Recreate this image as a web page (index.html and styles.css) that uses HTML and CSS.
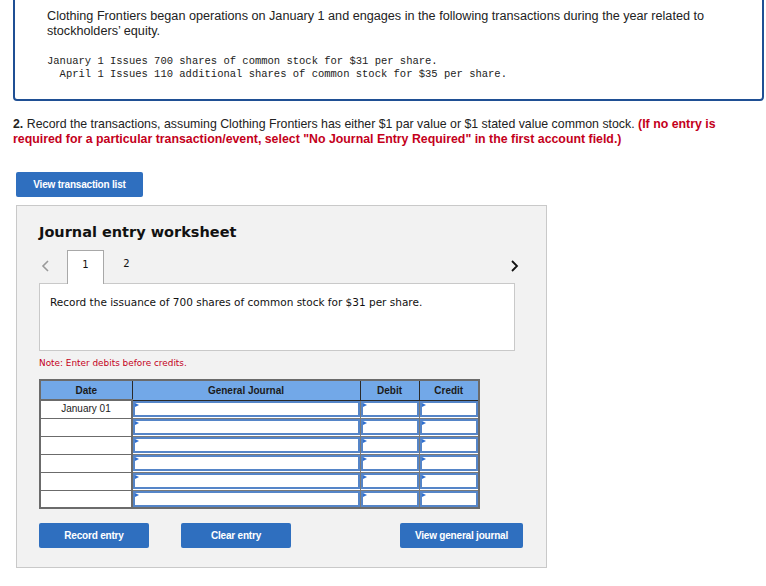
FILE: index.html
```html
<!DOCTYPE html>
<html>
<head>
<meta charset="utf-8">
<link rel="stylesheet" href="styles.css">
</head>
<body>
<div class="intro">
  <p class="lead">Clothing Frontiers began operations on January 1 and engages in the following transactions during the year related to stockholders’ equity.</p>
  <pre class="tx">January 1 Issues 700 shares of common stock for $31 per share.
  April 1 Issues 110 additional shares of common stock for $35 per share.</pre>
</div>
<p class="question"><b>2.</b> Record the transactions, assuming Clothing Frontiers has either $1 par value or $1 stated value common stock. <span class="warn">(If no entry is required for a particular transaction/event, select "No Journal Entry Required" in the first account field.)</span></p>
<button class="btn btn-list">View transaction list</button>
<div class="panel">
  <h2 class="title">Journal entry worksheet</h2>
  <div class="tabs">
    <span class="chev chev-left"><svg width="9" height="12" viewBox="0 0 9 12"><path d="M7 1 L2 6 L7 11" fill="none" stroke="#9a9a9a" stroke-width="1.6"/></svg></span>
    <span class="tab active">1</span>
    <span class="tab">2</span>
    <span class="chev chev-right"><svg width="9" height="12" viewBox="0 0 9 12"><path d="M2 1 L7 6 L2 11" fill="none" stroke="#111" stroke-width="1.8"/></svg></span>
  </div>
  <div class="prompt">Record the issuance of 700 shares of common stock for $31 per share.</div>
  <p class="note">Note: Enter debits before credits.</p>
  <table class="journal">
    <colgroup><col class="c-date"><col class="c-gj"><col class="c-dr"><col class="c-cr"></colgroup>
    <thead>
      <tr><th>Date</th><th>General Journal</th><th>Debit</th><th>Credit</th></tr>
    </thead>
    <tbody>
      <tr><td class="date">January 01</td><td class="in"><div class="box"></div></td><td class="in"><div class="box"></div></td><td class="in"><div class="box"></div></td></tr>
      <tr><td class="date"></td><td class="in"><div class="box"></div></td><td class="in"><div class="box"></div></td><td class="in"><div class="box"></div></td></tr>
      <tr><td class="date"></td><td class="in"><div class="box"></div></td><td class="in"><div class="box"></div></td><td class="in"><div class="box"></div></td></tr>
      <tr><td class="date"></td><td class="in"><div class="box"></div></td><td class="in"><div class="box"></div></td><td class="in"><div class="box"></div></td></tr>
      <tr><td class="date"></td><td class="in"><div class="box"></div></td><td class="in"><div class="box"></div></td><td class="in"><div class="box"></div></td></tr>
      <tr><td class="date"></td><td class="in"><div class="box"></div></td><td class="in"><div class="box"></div></td><td class="in"><div class="box"></div></td></tr>
    </tbody>
  </table>
  <div class="actions">
    <button class="btn btn-record">Record entry</button>
    <button class="btn btn-clear">Clear entry</button>
    <button class="btn btn-view">View general journal</button>
  </div>
</div>
</body>
</html>
```

FILE: styles.css
```css
* { box-sizing: border-box; }
html, body { margin: 0; padding: 0; background: #fff; }
body {
  font-family: "Liberation Sans", Arial, sans-serif;
  color: #222;
  width: 766px;
  height: 586px;
  overflow: hidden;
}
.intro {
  margin: -12px 0 0 13px;
  width: 751px;
  border: 2px solid #1f4f94;
  border-radius: 4px;
  padding: 19px 16px 18px 32px;
}
.lead {
  margin: 0;
  font-size: 12.65px;
  line-height: 15px;
  color: #222;
}
.tx {
  margin: 16px 0 0 0;
  font-family: "Liberation Mono", "Courier New", monospace;
  font-size: 10.5px;
  line-height: 13px;
  color: #222;
}
.question {
  margin: 16px 0 0 13px;
  width: 745px;
  font-size: 12.35px;
  line-height: 15px;
  color: #222;
}
.question b { font-weight: bold; }
.warn { color: #c4001b; font-weight: bold; }
.btn {
  display: block;
  border: 0;
  border-radius: 2px;
  background: #2f6fbf;
  color: #fff;
  font-family: "Liberation Sans", Arial, sans-serif;
  font-weight: bold;
  font-size: 10px;
  height: 25px;
  padding: 0;
  letter-spacing: -0.2px;
}
.btn-list { margin: 25px 0 0 16px; width: 127px; }
.panel {
  margin: 8px 0 0 16px;
  width: 531px;
  height: 363px;
  background: #f2f2f2;
  border: 1px solid #c9c9c9;
  padding: 0 0 0 22px;
  font-family: "DejaVu Sans", Verdana, sans-serif;
}
.title {
  margin: 16px 0 0 0;
  font-size: 14.5px;
  line-height: 20px;
  font-weight: bold;
  color: #111;
}
.tabs {
  display: flex;
  align-items: flex-end;
  margin-top: 8px;
  height: 33px;
  width: 476px;
  position: relative;
}
.chev { display: flex; align-items: center; height: 32px; }
.chev-left { margin-left: 2px; width: 26px; padding-bottom: 2px; }
.chev-right { margin-left: auto; margin-right: -4px; padding-bottom: 2px; }
.tab {
  width: 37px;
  height: 33px;
  display: flex;
  align-items: center;
  justify-content: center;
  font-size: 10px;
  color: #111;
  padding-bottom: 6px;
}
.tab.active {
  background: #fff;
  border: 1px solid #a8a8a8;
  border-bottom: 0;
  position: relative;
  z-index: 1;
  margin-bottom: -1px;
  height: 34px;
}
.tab + .tab { margin-left: 4px; }
.prompt {
  width: 476px;
  height: 68px;
  background: #fff;
  border: 1px solid #c9c9c9;
  padding: 12px 0 0 10px;
  font-size: 10.5px;
  color: #111;
}
.note {
  margin: 6px 0 0 0;
  font-size: 8.9px;
  line-height: 12px;
  color: #c4001b;
}
.journal {
  margin-top: 10px;
  border-collapse: collapse;
  width: 439px;
  table-layout: fixed;
  font-family: "Liberation Sans", Arial, sans-serif;
  border: 2px solid #6b6b6b;
}
.c-date { width: 92px; }
.c-gj { width: 228px; }
.c-dr { width: 59px; }
.c-cr { width: 60px; }
.journal th {
  background: #72a8e8;
  height: 20px;
  padding: 0;
  font-size: 10px;
  font-weight: bold;
  color: #1b1b1b;
  border: 1px solid #2a2a2a;
  border-top: 2px solid #6b6b6b;
  text-align: center;
}
.journal th:first-child { border-left: 2px solid #6b6b6b; }
.journal th:last-child { border-right: 2px solid #6b6b6b; }
.journal td {
  height: 18px;
  padding: 0;
  background: #fff;
  border: 1px solid #6b6b6b;
}
.journal td.date {
  font-size: 10px;
  color: #222;
  text-align: center;
  vertical-align: top;
  padding-top: 2px;
  border-width: 2px 2px 1px 2px;
}
.journal tr + tr td.date { border-top-width: 1px; }
.journal td.in { border: 1px solid #7a7a7a; }
.box {
  height: 16px;
  border: 2px solid #5585c8;
  position: relative;
  background: #fff;
}
.box::before {
  content: "";
  position: absolute;
  left: 0;
  top: 0;
  border-left: 4px solid #2f6fd0;
  border-top: 2.5px solid transparent;
  border-bottom: 2.5px solid transparent;
}
.actions {
  display: flex;
  margin-top: 14px;
}
.btn-record { width: 110px; }
.btn-clear { width: 110px; margin-left: 32px; }
.btn-view { width: 123px; margin-left: 109px; }
```
